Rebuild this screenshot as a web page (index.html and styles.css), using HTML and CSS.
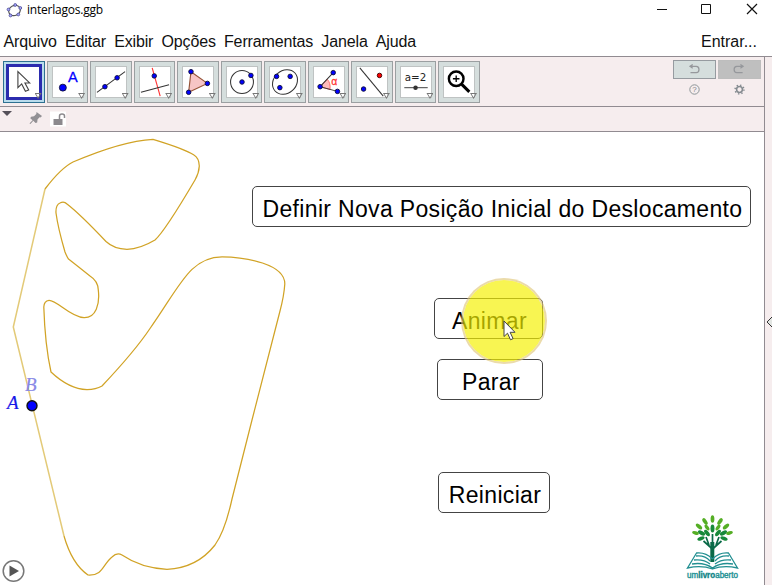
FILE: index.html
```html
<!DOCTYPE html>
<html lang="pt-BR">
<head>
<meta charset="utf-8">
<title>interlagos.ggb</title>
<link rel="stylesheet" href="styles.css">
</head>
<body>
<div class="app">
  <header class="titlebar">
    <svg class="logo" width="17" height="17" viewBox="0 0 17 17"><ellipse cx="8.500" cy="8.500" rx="6" ry="5" transform="rotate(-25 8.500 8.500)" fill="none" stroke="#555" stroke-width="1.200"/><g fill="#aaaaff" stroke="#4a4a90" stroke-width=".8"><circle cx="9.200" cy="3" r="1.400"/><circle cx="14.300" cy="6" r="1.400"/><circle cx="12.300" cy="12.500" r="1.400"/><circle cx="4.500" cy="13.500" r="1.400"/><circle cx="2.500" cy="7.500" r="1.400"/></g></svg>
    <span class="title">interlagos.ggb</span>
    <svg class="window-controls" width="104" height="18" viewBox="656 0 104 18" fill="none" stroke="#111"><path d="M657 9.500h10M701.500 4.500h9v9h-9z"/><path d="M747 4l10 10M757 4l-10 10" stroke-width="1.200"/></svg>
  </header>
  <nav class="menu">
    <span>Arquivo</span><span>Editar</span><span>Exibir</span><span>Opções</span><span>Ferramentas</span><span>Janela</span><span>Ajuda</span><span class="signin">Entrar...</span>
  </nav>
  <div class="body">
    <main class="main">
      <div class="toolbar">
        <div class="tools">
          <div class="tool selected"><svg viewBox="0 0 32 32"><path d="M9.500 5v17l4-4 4 8 3.500-1.500-4-7.500h5z" fill="#fff" stroke="#444" stroke-width="1.200"/></svg></div>
          <div class="tool"><svg viewBox="0 0 32 32"><circle class="pt" cx="10.500" cy="22" r="3.700"/><text x="16" y="16.500" class="letter">A</text></svg></div>
          <div class="tool"><svg viewBox="0 0 32 32"><path class="ln" d="M1 27L31 5"/><circle class="pt" cx="9.500" cy="21" r="2.400"/><circle class="pt" cx="22.500" cy="11.500" r="2.400"/></svg></div>
          <div class="tool"><svg viewBox="0 0 32 32"><path d="M13 1l8.500 30" stroke="#f33" stroke-width="1.200"/><path class="ln" d="M1 27l30-8"/><circle class="pt" cx="15.200" cy="9.500" r="2.400"/></svg></div>
          <div class="tool"><svg viewBox="0 0 32 32"><path d="M8.500 5l17.500 12.500-20 9.500z" fill="#f6c5c5" stroke="#955338" stroke-width="1.200"/><circle class="pt" cx="8.500" cy="5" r="2.400"/><circle class="pt" cx="26" cy="17.500" r="2.400"/><circle class="pt" cx="6" cy="27" r="2.400"/></svg></div>
          <div class="tool"><svg viewBox="0 0 32 32"><circle cx="16" cy="16" r="12.200" class="ln"/><circle class="pt" cx="16" cy="16" r="2.400"/><circle class="pt" cx="25.500" cy="9" r="2.400"/></svg></div>
          <div class="tool"><svg viewBox="0 0 32 32"><ellipse cx="16" cy="16" rx="14.300" ry="12" transform="rotate(-42 16 16)" class="ln"/><circle class="pt" cx="7" cy="10" r="2.400"/><circle class="pt" cx="21.500" cy="10" r="2.400"/><circle class="pt" cx="10.500" cy="22" r="2.400"/></svg></div>
          <div class="tool"><svg viewBox="0 0 32 32"><path d="M6.500 21l7.500-8q4 4 3 11z" fill="#fbb" stroke="#f66"/><path class="ln" d="M20.500 6l-14 15 18.500 5"/><circle class="pt" cx="20.500" cy="6" r="2.400"/><circle class="pt" cx="6.500" cy="21" r="2.400"/><circle class="pt" cx="25" cy="26" r="2.400"/><text x="18.500" y="19.500" class="alpha">α</text></svg></div>
          <div class="tool"><svg viewBox="0 0 32 32"><path class="ln" d="M3 1l25 30"/><circle class="pt" cx="7" cy="23.500" r="2.400"/><circle class="pt red" cx="24" cy="9" r="2.400"/></svg></div>
          <div class="tool"><svg viewBox="0 0 32 32"><text x="4" y="15" class="slider" textLength="23">a=2</text><path d="M3.500 22h25" stroke="#666" stroke-width="1.300"/><circle cx="15.500" cy="22" r="2.400" fill="#333"/></svg></div>
          <div class="tool"><svg viewBox="0 0 32 32"><g fill="none" stroke="#000"><circle cx="13" cy="12.500" r="7.800" stroke-width="2.600"/><path d="M19 18.500l8 8" stroke-width="3.200"/><path d="M9.500 12.500h7M13 9v7" stroke-width="1.400"/></g></svg></div>
        </div>
        <div class="side-tools">
          <div class="history"><svg viewBox="0 0 42 19"><path d="M16.500 6h6.500q3 0 3 3.500t-3 3.500h-6.500M19 4l-3 2 3 2"/></svg></div>
          <div class="history off"><svg viewBox="0 0 42 19"><path d="M24.500 6h-6.500q-3 0-3 3.500t3 3.500h6.500M22 4l3 2-3 2"/></svg></div>
          <svg class="mini" width="13" height="13" viewBox="0 0 13 13"><circle cx="6.500" cy="6.500" r="4.700" fill="none" stroke="#8c9597"/><text x="6.500" y="9.300" class="question">?</text></svg>
          <svg class="mini" width="13" height="13" viewBox="0 0 13 13" fill="none" stroke="#858b90"><circle cx="6.500" cy="6.500" r="2.900" stroke-width="1.500"/><circle cx="6.500" cy="6.500" r="4.400" stroke-width="1.500" stroke-dasharray="1.400 2.056"/></svg>
        </div>
      </div>
      <div class="stylebar">
        <svg width="70" height="24" viewBox="0 107 70 24"><path d="M2 111h10l-5 5z" fill="#555059"/><path d="M36.500 112l5.500 4-1.500 1.500-1-.3-2 2.300-.3 3-1.700.5-2.200-2.200-2.600 3-1 .2.200-1 2.700-2.700-2.300-2 .7-1.500 3-.5 2.300-2.300z" fill="#929094"/><path d="M50 111.500h16v15H50z" fill="#fff"/><path d="M53.500 119h9v6h-9z" fill="#8b898d"/><path d="M59.500 119v-3q0-2 2.500-2t2.500 2v2" fill="none" stroke="#8b898d" stroke-width="1.500"/></svg>
      </div>
      <section class="canvas">
        <svg class="drawing" width="764" height="453" viewBox="0 132 764 453">
          <g class="track">
            <path class="light" d="M45 189L13.300 327L64 536"/>
            <path d="M45 189Q61 168 73 162Q122 141 153 139.300Q185 149 194 155Q199 158 199.300 166Q199 173 195 180Q165 231 155 240Q140 249 127 249.300Q114 249 106 241.500Q80 214 67 204Q64 201 60 203Q55.500 205 56 213Q58 228 65 252Q67 257 68.500 259Q80 268 90 276Q98 281 98.300 290C100 304 96 318 84 317.700C70 317 57 300 49 300.300Q44 301 43.800 307Q45 345 51 372Q69 389 87 389.700Q96 389.500 102 386Q135 351 150 328.500C180 286 190 257 222 256.800C246 257 285 264 284.800 284Q284 296 280 311L252 420L232 499Q225 531 215 545Q197 568 167 569.300Q141 568 122 555Q117 552 112 557C103 564 103 576 88 575Q72 564 64 536"/>
          </g>
          <circle cx="32" cy="405.700" r="5" fill="#00f" stroke="#111" stroke-width="1.400"/>
          <text x="7" y="409" class="label-a">A</text><text x="25" y="391" class="label-b">B</text>
          <circle cx="13.500" cy="571" r="10.300" fill="#fff" stroke="#777" stroke-width="1.500"/><path d="M9.500 565.500v11l9.500-5.500z" fill="#555"/>
          <g class="brand">
            <g stroke="#0a6a48" fill="none"><path d="M712.300 562V542" stroke-width="4"/><path d="M712.500 549l-9-8M712.500 549l9-8M712.500 543v-9M709 545l-3-8M716 545l3-8" stroke-width="1.700"/></g>
            <g fill="#17893a"><ellipse cx="712.500" cy="528.500" rx="2" ry="4"/><ellipse cx="707" cy="533" rx="1.900" ry="3.800" transform="rotate(-40 707 533)"/><ellipse cx="718" cy="533" rx="1.900" ry="3.800" transform="rotate(40 718 533)"/><ellipse cx="701.500" cy="533" rx="1.900" ry="3.900" transform="rotate(-60 701.500 533)"/><ellipse cx="723.500" cy="533" rx="1.900" ry="3.900" transform="rotate(60 723.500 533)"/><ellipse cx="701" cy="538.500" rx="1.800" ry="3.800" transform="rotate(70 701 538.500)"/><ellipse cx="724" cy="538.500" rx="1.800" ry="3.800" transform="rotate(-70 724 538.500)"/></g>
            <g fill="#55ae25"><ellipse cx="712.500" cy="519" rx="1.900" ry="3.800"/><ellipse cx="705" cy="521.500" rx="1.900" ry="3.800" transform="rotate(-35 705 521.500)"/><ellipse cx="720" cy="521.500" rx="1.900" ry="3.800" transform="rotate(35 720 521.500)"/><ellipse cx="699" cy="526.500" rx="1.900" ry="3.800" transform="rotate(-50 699 526.500)"/><ellipse cx="726" cy="526.500" rx="1.900" ry="3.800" transform="rotate(50 726 526.500)"/><ellipse cx="695.500" cy="533" rx="1.700" ry="3.400" transform="rotate(-75 695.500 533)"/><ellipse cx="729.500" cy="533" rx="1.700" ry="3.400" transform="rotate(75 729.500 533)"/><ellipse cx="707" cy="527.500" rx="1.700" ry="3.400" transform="rotate(-35 707 527.500)"/><ellipse cx="718" cy="527.500" rx="1.700" ry="3.400" transform="rotate(35 718 527.500)"/></g>
            <g fill="none" stroke="#228f91" stroke-width="1.300"><path d="M712.500 559q-7-7-16-6l-9 15q14-3 25 1 11-4 25-1l-9-15q-9-1-16 6M692 564q12-2 20.500 4 8.500-6 20.500-4M696 556q9-1 14 5M729 556q-9-1-14 5M694 560q10-1 16 4M731 560q-10-1-16 4"/></g>
            <text x="687" y="578" class="brand-name" textLength="51" lengthAdjust="spacingAndGlyphs">um<tspan class="strong">livro</tspan>aberto</text>
          </g>
        </svg>
        <button class="action define">Definir Nova Posição Inicial do Deslocamento</button>
        <button class="action animate">Animar</button>
        <button class="action stop">Parar</button>
        <button class="action restart">Reiniciar</button>
        <div class="halo"></div>
        <svg class="pointer" width="14" height="22" viewBox="0 0 14 22"><path d="M1 1v15.500l3.500-3.300 3 6.600 2.600-1.200-3-6.300H12z" fill="#fff" stroke="#444"/></svg>
      </section>
    </main>
    <aside class="drawer"><svg width="7" height="12" viewBox="0 0 7 12"><path d="M7 1L2 6l5 5" fill="#e3e6e3" stroke="#333"/></svg></aside>
  </div>
</div>
</body>
</html>
```
FILE: styles.css
```css
* { box-sizing: border-box; }
body { margin: 0; background: #fff; overflow: hidden; font-family: "Liberation Sans", Arial, sans-serif; color: #111; }
.app { width: 772px; height: 585px; display: flex; flex-direction: column; }
.titlebar { height: 20px; display: flex; align-items: center; padding-left: 6px; }
.title { font: 12px/18px "Open Sans", sans-serif; margin-left: 4px; letter-spacing: -.22px; color: #000; }
.window-controls { margin: 0 12px 2px auto; }
.menu { height: 36px; display: flex; padding: 12px 15px 0 3.5px; gap: 8.2px; font-size: 16px; line-height: 19px; letter-spacing: -.14px; }
.signin { margin-left: auto; letter-spacing: 0; }
.body { flex: 1; display: flex; border-top: 1px solid #918b91; min-height: 0; }
.main { width: 764px; display: flex; flex-direction: column; }
.toolbar { height: 50px; display: flex; justify-content: space-between; background: #f6edee; border-bottom: 1px solid #918b91; padding: 4px 3px 0; }
.tools { display: flex; gap: 2px; }
.tool { width: 41.55px; height: 42px; padding: 4px; border: 1px solid #9b9fa1; background: #d5dedd; position: relative; }
.tool svg { display: block; width: 32px; height: 32px; background: #fff; border: 1px solid #bfc3c3; }
.tool::after { content: ""; position: absolute; right: 2px; bottom: 3px; width: 7px; height: 6px; background: #777; clip-path: polygon(0 0, 100% 0, 50% 100%, 0 0, 22% 18%, 50% 72%, 78% 18%, 22% 18%); }
.selected { background: #b9dcec; border-color: #2e7191; padding: 2px; }
.selected svg { width: 36px; height: 36px; border: 3px solid #2b2bae; }
.ln { fill: none; stroke: #333; stroke-width: 1.1; }
.pt { fill: #00f; stroke: #101040; stroke-width: 1; }
.red { fill: #f00; stroke: #400; }
.letter { font-size: 15.5px; fill: #00f; stroke: #00f; stroke-width: .3; }
.alpha { font-size: 11px; fill: #f33; stroke: #f33; stroke-width: .3; }
.slider { font: 11px "DejaVu Sans", sans-serif; fill: #222; }
.side-tools { width: 88px; display: grid; grid-template-columns: 43px 43px; grid-template-rows: 19px 14px; gap: 4px 2px; margin-top: -1px; }
.history { border: 1px solid #969ba0; background: #d5dedd; }
.history svg { display: block; width: 100%; height: 17px; fill: none; stroke: #96989c; stroke-width: 1.4; }
.off { border-color: #bdbdbd; background: #bfbfbf; }
.mini { justify-self: center; }
.question { font-size: 8px; text-anchor: middle; fill: #7b8487; }
.stylebar { height: 25px; background: #f6edee; border-bottom: 1px solid #918b91; }
.stylebar svg { display: block; }
.canvas { flex: 1; position: relative; background: #fff; }
.drawing { display: block; }
.track path { fill: none; stroke: #d1a326; stroke-width: 1.25; stroke-linejoin: round; }
.track .light { stroke: #e3ca78; stroke-width: 1.5; }
.label-a, .label-b { font: italic 19px "Liberation Serif", serif; fill: #1717e8; stroke: #1717e8; stroke-width: .2; }
.label-b { fill: #8888e6; stroke: #8888e6; }
.brand-name { font-size: 8.5px; fill: #239295; stroke: #239295; stroke-width: .4; }
.strong { font-weight: bold; fill: #087776; }
.action { position: absolute; height: 40px; padding: 4px 0 0 2px; border: 1px solid #444; border-radius: 5px; background: #fff; color: #000; font: 23px/30px "Liberation Sans", Arial, sans-serif; letter-spacing: .33px; white-space: nowrap; }
.define { left: 252px; top: 54px; width: 499px; height: 41px; }
.animate { left: 434px; top: 166px; width: 109px; height: 41px; }
.stop { left: 437px; top: 227px; width: 106px; height: 41px; }
.restart { left: 438px; top: 340px; width: 112px; height: 41px; }
.halo { position: absolute; left: 461px; top: 146px; width: 86px; height: 86px; border-radius: 50%; background: rgba(244, 240, 0, .68); border: 2px solid rgba(225, 200, 125, .65); background-clip: padding-box; }
.pointer { position: absolute; left: 503px; top: 188px; }
.drawer { width: 8px; background: #f6edee; border-left: 1px solid #918b91; padding-top: 259px; }
.drawer svg { display: block; }
```
